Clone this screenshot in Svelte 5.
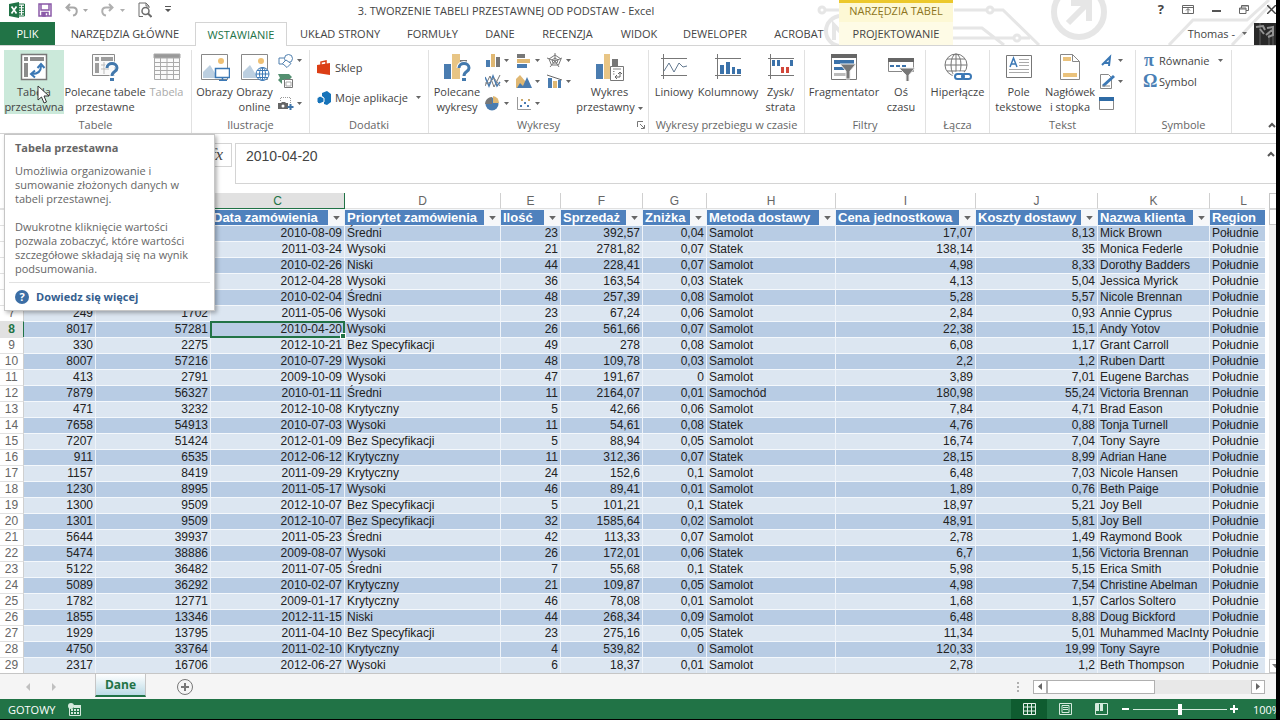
<script>
	let formula = '2010-04-20';
	let zoom = 50;
	let selectedRow = 8;

	const tabs = [
		'NARZĘDZIA GŁÓWNE',
		'WSTAWIANIE',
		'UKŁAD STRONY',
		'FORMUŁY',
		'DANE',
		'RECENZJA',
		'WIDOK',
		'DEWELOPER',
		'ACROBAT',
		'PROJEKTOWANIE'
	];
	let activeTab = 'WSTAWIANIE';

	const columns = [
		{ letter: 'A', title: '', num: true },
		{ letter: 'B', title: '', num: true },
		{ letter: 'C', title: 'Data zamówienia', num: true },
		{ letter: 'D', title: 'Priorytet zamówienia' },
		{ letter: 'E', title: 'Ilość', num: true },
		{ letter: 'F', title: 'Sprzedaż', num: true },
		{ letter: 'G', title: 'Zniżka', num: true },
		{ letter: 'H', title: 'Metoda dostawy' },
		{ letter: 'I', title: 'Cena jednostkowa', num: true },
		{ letter: 'J', title: 'Koszty dostawy', num: true },
		{ letter: 'K', title: 'Nazwa klienta' },
		{ letter: 'L', title: 'Region' }
	];

	const rows = [
		['', '', '2010-08-09', 'Średni', '23', '392,57', '0,04', 'Samolot', '17,07', '8,13', 'Mick Brown'],
		['', '', '2011-03-24', 'Wysoki', '21', '2781,82', '0,07', 'Statek', '138,14', '35', 'Monica Federle'],
		['', '', '2010-02-26', 'Niski', '44', '228,41', '0,07', 'Samolot', '4,98', '8,33', 'Dorothy Badders'],
		['', '', '2012-04-28', 'Wysoki', '36', '163,54', '0,03', 'Statek', '4,13', '5,04', 'Jessica Myrick'],
		['', '', '2010-02-04', 'Średni', '48', '257,39', '0,08', 'Samolot', '5,28', '5,57', 'Nicole Brennan'],
		['249', '1702', '2011-05-06', 'Wysoki', '23', '67,24', '0,06', 'Samolot', '2,84', '0,93', 'Annie Cyprus'],
		['8017', '57281', '2010-04-20', 'Wysoki', '26', '561,66', '0,07', 'Samolot', '22,38', '15,1', 'Andy Yotov'],
		['330', '2275', '2012-10-21', 'Bez Specyfikacji', '49', '278', '0,08', 'Samolot', '6,08', '1,17', 'Grant Carroll'],
		['8007', '57216', '2010-07-29', 'Wysoki', '48', '109,78', '0,03', 'Samolot', '2,2', '1,2', 'Ruben Dartt'],
		['413', '2791', '2009-10-09', 'Wysoki', '47', '191,67', '0', 'Samolot', '3,89', '7,01', 'Eugene Barchas'],
		['7879', '56327', '2010-01-11', 'Średni', '11', '2164,07', '0,01', 'Samochód', '180,98', '55,24', 'Victoria Brennan'],
		['471', '3232', '2012-10-08', 'Krytyczny', '5', '42,66', '0,06', 'Samolot', '7,84', '4,71', 'Brad Eason'],
		['7658', '54913', '2010-07-03', 'Wysoki', '11', '54,61', '0,08', 'Statek', '4,76', '0,88', 'Tonja Turnell'],
		['7207', '51424', '2012-01-09', 'Bez Specyfikacji', '5', '88,94', '0,05', 'Samolot', '16,74', '7,04', 'Tony Sayre'],
		['911', '6535', '2012-06-12', 'Krytyczny', '11', '312,36', '0,07', 'Statek', '28,15', '8,99', 'Adrian Hane'],
		['1157', '8419', '2011-09-29', 'Krytyczny', '24', '152,6', '0,1', 'Samolot', '6,48', '7,03', 'Nicole Hansen'],
		['1230', '8995', '2011-05-17', 'Wysoki', '46', '89,41', '0,01', 'Samolot', '1,89', '0,76', 'Beth Paige'],
		['1300', '9509', '2012-10-07', 'Bez Specyfikacji', '5', '101,21', '0,1', 'Statek', '18,97', '5,21', 'Joy Bell'],
		['1301', '9509', '2012-10-07', 'Bez Specyfikacji', '32', '1585,64', '0,02', 'Samolot', '48,91', '5,81', 'Joy Bell'],
		['5644', '39937', '2011-05-23', 'Średni', '42', '113,33', '0,07', 'Samolot', '2,78', '1,49', 'Raymond Book'],
		['5474', '38886', '2009-08-07', 'Wysoki', '26', '172,01', '0,06', 'Statek', '6,7', '1,56', 'Victoria Brennan'],
		['5122', '36482', '2011-07-05', 'Średni', '7', '55,68', '0,1', 'Statek', '5,98', '5,15', 'Erica Smith'],
		['5089', '36292', '2010-02-07', 'Krytyczny', '21', '109,87', '0,05', 'Samolot', '4,98', '7,54', 'Christine Abelman'],
		['1782', '12771', '2009-01-17', 'Krytyczny', '46', '78,08', '0,01', 'Samolot', '1,68', '1,57', 'Carlos Soltero'],
		['1855', '13346', '2012-11-15', 'Niski', '44', '268,34', '0,09', 'Samolot', '6,48', '8,88', 'Doug Bickford'],
		['1929', '13795', '2011-04-10', 'Bez Specyfikacji', '23', '275,16', '0,05', 'Statek', '11,34', '5,01', 'Muhammed MacInty'],
		['4750', '33764', '2011-02-10', 'Krytyczny', '4', '539,82', '0', 'Samolot', '120,33', '19,99', 'Tony Sayre'],
		['2317', '16706', '2012-06-27', 'Wysoki', '6', '18,37', '0,01', 'Samolot', '2,78', '1,2', 'Beth Thompson']
	].map((r) => [...r, 'Południe']);
</script>

{#snippet caret()}
	<svg class="caret" width="5" height="3" viewBox="0 0 5 3"><path d="M0 0h5L2.500 3z" fill="#666" /></svg>
{/snippet}

<div class="app">
	<header>
		<svg class="art" width="470" height="45" viewBox="0 0 470 45" fill="none" stroke="#e6e6e6" stroke-width="3">
			<circle cx="16" cy="10" r="3" />
			<path d="M19 10h20M148 10h33M187 10h10l36 35M146 28h30l22 17M146 38h62M214 38h10" />
			<circle cx="184" cy="10" r="3" fill="#fff" />
			<circle cx="211" cy="38" r="3" fill="#fff" />
			<circle cx="35" cy="31" r="15" stroke-width="4" />
			<path d="M28 40V25l12 13V25" stroke-width="4" />
			<circle cx="273" cy="12" r="25" stroke-width="6" />
			<path d="M262 23l20-20M265 3h18v18" stroke-width="6" />
			<path d="M363 45l24-25h54l22-20M426 45l38-40" />
		</svg>

		<div class="titlebar">
			<div class="quick">
				<svg width="16" height="16" viewBox="0 0 16 16">
					<path d="M9 2h6.500v12H9z" fill="#fff" stroke="#217346" />
					<path d="M10 4.500h2M13 4.500h2M10 7h2M13 7h2M10 9.500h2M13 9.500h2M10 12h2M13 12h2" stroke="#217346" stroke-width="1.500" />
					<path d="M0 2l10-2v16L0 14z" fill="#217346" />
					<path d="M2.500 4.500l5 7M7.500 4.500l-5 7" stroke="#fff" stroke-width="1.700" />
				</svg>
				<button aria-label="Zapisz">
					<svg width="14" height="14" viewBox="0 0 14 14" fill="none" stroke="#8a5aa8" stroke-width="1.500">
						<path d="M1 1h12v12H1zM3 1v6h8V1M4 13V9.500h6V13" /><path d="M5 10.500h2V13H5z" fill="#8a5aa8" />
					</svg>
				</button>
				<button aria-label="Cofnij">
					<svg width="23" height="14" viewBox="0 0 23 14" fill="none" stroke="#a8a8a8" stroke-width="2">
						<path d="M5 1L1.500 4.500 5 8M2 4.500h6c5 0 5 7 0 8" /><path d="M18 6h5l-2.500 3z" fill="#a8a8a8" stroke="none" />
					</svg>
				</button>
				<button aria-label="Ponów">
					<svg width="24" height="14" viewBox="0 0 24 14" fill="none" stroke="#b0b0b0" stroke-width="2">
						<path d="M8 1l3.500 3.500L8 8M11 4.500H5c-5 0-5 7 0 8" /><path d="M19 6h5l-2.500 3z" fill="#b0b0b0" stroke="none" />
					</svg>
				</button>
				<button aria-label="Podgląd wydruku">
					<svg width="14" height="16" viewBox="0 0 14 16" fill="none" stroke="#6d6d6d">
						<path d="M5 14.500H1V1h7l3 3v2M8 1v3h3" /><circle cx="7.500" cy="9" r="3.500" stroke-width="1.500" /><path d="M10 11.500l3.500 3.500" stroke-width="2" />
					</svg>
				</button>
				<button aria-label="Dostosuj">
					<svg width="6" height="7" viewBox="0 0 6 7"><path d="M0 0h6v1H0zM0 3h6L3 6z" fill="#555" /></svg>
				</button>
			</div>
			<div class="title">3. TWORZENIE TABELI PRZESTAWNEJ OD PODSTAW - Excel</div>
			<div class="context">NARZĘDZIA TABEL</div>
			<div class="window">
				<button class="help" aria-label="Pomoc">?</button>
				<button aria-label="Opcje wstążki">
					<svg width="12" height="9" viewBox="0 0 12 9" fill="none" stroke="#666"><path d="M.5.5h11v8H.5zM.5 2.500h11M6 8V4M4 5.500l2-2 2 2" /></svg>
				</button>
				<button aria-label="Minimalizuj">
					<svg width="9" height="9" viewBox="0 0 9 9"><path d="M0 5h9v2H0z" fill="#555" /></svg>
				</button>
				<button aria-label="Przywróć">
					<svg width="10" height="9" viewBox="0 0 10 9" fill="none" stroke="#666"><path d="M2.500 3V.5h7v5H7M.5 3h6.500v5.500H.5zM.5 4h6.500M3 1h6" /></svg>
				</button>
				<button aria-label="Zamknij">
					<svg width="9" height="9" viewBox="0 0 9 9"><path d="M0 0l9 9M9 0L0 9" stroke="#444" stroke-width="1.500" /></svg>
				</button>
			</div>
		</div>

		<nav class="tabs">
			<button class="file">PLIK</button>
			{#each tabs as tab}
				<button
					class:active={tab === activeTab}
					class:design={tab === 'PROJEKTOWANIE'}
					on:click={() => (activeTab = tab)}>{tab}</button>
			{/each}
			<div class="account">
				<span>Thomas -</span>
				{@render caret()}
				<svg width="22" height="22" viewBox="0 0 22 22">
					<path d="M0 0h22v22H0z" fill="#292929" />
					<path d="M6 0v22M19 8v14M15 9v13" stroke="#454545" stroke-width="2" />
					<path d="M2 4l7-1 2 4M6 6l4 5M13 5l6-1v8l-5 2M12 12l6-5" fill="none" stroke="#939393" stroke-width="2" />
				</svg>
			</div>
		</nav>
	</header>

	<section class="ribbon">
		<div class="group tables">
			<div class="body">
				<button class="big hot">
					<svg width="28" height="28" viewBox="0 0 28 28" fill="none">
						<path d="M1.500 1.500h25v25h-25z" fill="#fff" stroke="#777" stroke-width="1.500" />
						<path d="M4 4h4v4H4zM10 4h14v4H10zM4 10h4v14H4z" fill="#8c8c8c" />
						<path d="M12 21c6 0 9-3 9-8M17.500 15l3.500-4 3.500 4M15 17.500L11 21l4 3.500" stroke="#3b78b5" stroke-width="2" />
					</svg>
					<span>Tabela<br />przestawna</span>
				</button>
				<button class="big">
					<svg width="28" height="28" viewBox="0 0 28 28" fill="none">
						<path d="M1.500 1.500h22v21h-22z" fill="#fafafa" stroke="#8b8b8b" />
						<path d="M4 4h4v4H4zM10 4h12v4H10zM4 10h4v10H4z" fill="#9d9d9d" /><path d="M10 12h8M10 16h8M13 9v12" stroke="#bbb" />
						<path d="M16 15c0-6 10-6 10 0 0 4-5 3-5 8" stroke="#fff" stroke-width="5" /><path d="M16 15c0-6 10-6 10 0 0 4-5 3-5 8" stroke="#4379ad" stroke-width="3" /><path d="M19 25h4v3h-4z" fill="#4379ad" />
					</svg>
					<span>Polecane tabele<br />przestawne</span>
				</button>
				<button class="big disabled" disabled>
					<svg width="28" height="28" viewBox="0 0 28 28" fill="none" stroke="#aaa">
						<path d="M1.500 1.500h25v25h-25z" fill="#fafafa" /><path d="M1 1h26v4H1z" fill="#999" />
						<path d="M1 9.500h26M1 13.500h26M1 17.500h26M1 21.500h26M7.500 5v21M14 5v21M20.500 5v21" />
					</svg>
					<span>Tabela</span>
				</button>
			</div>
			<div class="name">Tabele</div>
			<svg class="cursor" width="13" height="19" viewBox="0 0 13 19"><path d="M1 1v14l3.500-3 2.500 6 2.500-1L7 11h5z" fill="#fff" stroke="#333" /></svg>
		</div>

		<div class="group pictures">
			<div class="body">
				<button class="big">
					<svg width="30" height="28" viewBox="0 0 30 28" fill="none">
						<path d="M1.500 1.500h26v25h-26z" fill="#fff" stroke="#888" /><circle cx="21" cy="8" r="3" fill="#eec075" />
						<path d="M3 25v-6l7-7 8 13z" fill="#bccfe0" />
						<path d="M15.500 15.500h14v9h-14z" fill="#fff" stroke="#3b78b5" stroke-width="1.500" /><path d="M19 27.500h8M22.500 25v2" stroke="#3b78b5" stroke-width="1.500" />
					</svg>
					<span>Obrazy</span>
				</button>
				<button class="big">
					<svg width="30" height="28" viewBox="0 0 30 28" fill="none">
						<path d="M1.500 1.500h26v25h-26z" fill="#fff" stroke="#888" /><circle cx="21" cy="8" r="3" fill="#eec075" />
						<path d="M3 25v-6l7-7 8 13z" fill="#bccfe0" />
						<g stroke="#3b78b5"><circle cx="22.500" cy="21" r="6.500" fill="#fff" /><ellipse cx="22.500" cy="21" rx="3" ry="6.500" /><path d="M16 21h13M17 17.500h11M17 24.500h11M22.500 15v12" /></g>
					</svg>
					<span>Obrazy<br />online</span>
				</button>
				<div class="minis">
					<button aria-label="Kształty">
						<svg width="16" height="15" viewBox="0 0 16 15" fill="#fff" stroke="#4f7fae"><path d="M1 5h7v6H1z" /><circle cx="10.500" cy="5.500" r="4" /><path d="M8 7l5 3.500-4 4-4.500-4z" /></svg>{@render caret()}
					</button>
					<button aria-label="SmartArt">
						<svg width="16" height="15" viewBox="0 0 16 15"><path d="M0 0h11l3 3-3 3H4v4L0 6l2-2z" fill="#538f70" /><path d="M6.500 5.500h8v8h-8z" fill="#fff" stroke="#777" /><path d="M8 8h5v4H8z" fill="none" stroke="#aaa" /></svg>
					</button>
					<button aria-label="Zrzut ekranu">
						<svg width="16" height="15" viewBox="0 0 16 15" fill="none"><path d="M2.500 5V1.500h10V7" stroke="#999" stroke-dasharray="1 1" /><path d="M0 7h3l1-1h3l1 1h2v6H0z" fill="#666" /><circle cx="5" cy="10" r="1.500" fill="#fff" /><path d="M12.500 8v6M9.500 11h6" stroke="#3f74a8" stroke-width="2" /></svg>{@render caret()}
					</button>
				</div>
			</div>
			<div class="name">Ilustracje</div>
		</div>

		<div class="group addins">
			<div class="body">
				<button class="line">
					<svg width="14" height="15" viewBox="0 0 14 15"><path d="M0 5l13-2v12L0 13z" fill="#dc3e15" /><path d="M4 6V2l5-1v4" fill="none" stroke="#dc3e15" stroke-width="1.500" /></svg>
					<span>Sklep</span>
				</button>
				<button class="line">
					<svg width="14" height="15" viewBox="0 0 14 15" fill="#1673b9"><path d="M5 3l5-2 4 3v8l-4 3-3-1V8L5 6z" /><path d="M0 8l3-2 4 2v4l-5 2-2-2z" stroke="#fff" /></svg>
					<span>Moje aplikacje</span>
					{@render caret()}
				</button>
			</div>
			<div class="name">Dodatki</div>
		</div>

		<div class="group charts">
			<div class="body">
				<button class="big">
					<svg width="28" height="28" viewBox="0 0 28 28" fill="none">
						<path d="M1 11h7v15H1z" fill="#4a7cb0" /><path d="M9 1h8v25H9z" fill="#e8c585" /><path d="M17 7h7v6h-7z" fill="#777" />
						<path d="M16 15c0-6 10-6 10 0 0 4-5 3-5 8" stroke="#fff" stroke-width="5" /><path d="M16 15c0-6 10-6 10 0 0 4-5 3-5 8" stroke="#4379ad" stroke-width="3" /><path d="M19 25h4v3h-4z" fill="#4379ad" />
					</svg>
					<span>Polecane<br />wykresy</span>
				</button>
				<div class="minis three">
					<button aria-label="Wykres kolumnowy"><svg width="16" height="15" viewBox="0 0 16 15"><path d="M1 7h4v7H1z" fill="#4a7cb0" /><path d="M6 1h4v13H6z" fill="#e0b873" /><path d="M11 4h4v10h-4z" fill="#777" /></svg>{@render caret()}</button>
					<button aria-label="Wykres słupkowy"><svg width="16" height="15" viewBox="0 0 16 15"><path d="M1 1h8v4H1z" fill="#777" /><path d="M1 6h13v4H1z" fill="#e0b873" /><path d="M1 11h10v4H1z" fill="#4a7cb0" /></svg>{@render caret()}</button>
					<button aria-label="Wykres radarowy"><svg width="16" height="15" viewBox="0 0 16 15" fill="none" stroke="#777"><path d="M8 0v8l7-3M8 8l4 6M8 8l-5 6M8 8L0 5M8 2l6 4-2.500 6h-7L2 6zM8 5l3 2-1 3H6L5 7z" /></svg>{@render caret()}</button>
					<button aria-label="Wykres liniowy"><svg width="16" height="15" viewBox="0 0 16 15" fill="none"><path d="M0 12L5 2l4 11 6-12" stroke="#777" /><path d="M0 3l4 9 4-10 4 10 3-4" stroke="#4a7cb0" stroke-width="1.500" /><path d="M0 9h4l5-5 6 8" stroke="#888" /></svg>{@render caret()}</button>
					<button aria-label="Wykres warstwowy"><svg width="16" height="15" viewBox="0 0 16 15"><path d="M0 14V5l4-4 11 13z" fill="#e0b873" /><path d="M1 14l3-5 3 3 4-9 5 11z" fill="#4a7cb0" /></svg>{@render caret()}</button>
					<button aria-label="Wykres kombi"><svg width="16" height="15" viewBox="0 0 16 15"><path d="M1 4h4v10H1z" fill="#4a7cb0" /><path d="M6 7h4v7H6z" fill="#e0b873" /><path d="M11 6h3v8h-3z" fill="#4a7cb0" /><path d="M0 1l15 5" stroke="#666" /></svg>{@render caret()}</button>
					<button aria-label="Wykres kołowy"><svg width="16" height="15" viewBox="0 0 16 15"><circle cx="7" cy="8" r="6.500" fill="#4a7cb0" /><path d="M7 8H0a7 7 0 0 1 7-7z" fill="#777" /><path d="M8 7V0a7 7 0 0 1 6 7z" fill="#e0b873" /></svg>{@render caret()}</button>
					<button aria-label="Wykres punktowy"><svg width="16" height="15" viewBox="0 0 16 15"><path d="M1.500 1v12.500H15" fill="none" stroke="#999" /><path d="M4 9h2v2H4zM8 6h2v2H8zM11 9h2v2h-2z" fill="#4a7cb0" /><path d="M5 3h2v2H5zM12 3h2v2h-2z" fill="#c9a86c" /></svg>{@render caret()}</button>
				</div>
				<button class="big">
					<svg width="28" height="28" viewBox="0 0 28 28" fill="none">
						<path d="M0 11h7v15H0z" fill="#4a7cb0" /><path d="M8 1h6v25H8z" fill="#e8c585" /><path d="M16 6h6v8h-6z" fill="#777" />
						<path d="M14.500 13.500h13v14h-13z" fill="#fff" stroke="#777" /><path d="M17 16h8M17 18.500h1.500M17 21h1.500" stroke="#888" /><path d="M19 24h5v-5M22 21l2-2 2 2M21 22l-2 2 2 2" stroke="#666" />
					</svg>
					<span>Wykres<br />przestawny {@render caret()}</span>
				</button>
			</div>
			<div class="name">Wykresy</div>
			<button class="launcher" aria-label="Więcej opcji">
				<svg width="8" height="8" viewBox="0 0 8 8" fill="none" stroke="#777"><path d="M.5 6V.5H6M3 3l4 4M7.500 4v3.500H4" /></svg>
			</button>
		</div>

		<div class="group sparklines">
			<div class="body">
				<button class="big">
					<svg width="28" height="28" viewBox="0 0 28 28" fill="none" stroke="#777"><path d="M3.500 1v25M1 5.500h26M1 22.500h26" /><path d="M4 18l5-8 5 9 5-9 4 4 4-1" stroke="#61788f" /></svg>
					<span>Liniowy</span>
				</button>
				<button class="big">
					<svg width="28" height="28" viewBox="0 0 28 28" fill="none" stroke="#777"><path d="M3.500 1v25M1 5.500h26M1 22.500h26" /><path d="M6 12h4v9H6zM12 9h4v12h-4zM18 14h3v7h-3zM23 16h4v5h-4z" fill="#3b72aa" stroke="none" /></svg>
					<span>Kolumnowy</span>
				</button>
				<button class="big">
					<svg width="28" height="28" viewBox="0 0 28 28" fill="none" stroke="#777"><path d="M3.500 1v25M1 5.500h26M1 22.500h26" /><path d="M5 7h3v6H5zM10 7h3v6h-3zM23 7h3v6h-3z" fill="#3b72aa" stroke="none" /><path d="M14 14h3v6h-3zM19 14h3v6h-3z" fill="#d2473a" stroke="none" /></svg>
					<span>Zysk/<br />strata</span>
				</button>
			</div>
			<div class="name">Wykresy przebiegu w czasie</div>
		</div>

		<div class="group filters">
			<div class="body">
				<button class="big">
					<svg width="28" height="28" viewBox="0 0 28 28"><path d="M1.500 1.500h25v25h-25z" fill="#fff" stroke="#777" /><path d="M1 1h26v4H1z" fill="#666" /><path d="M4 7h20v4H4zM4 14h12v3H4z" fill="#3b72aa" /><path d="M4 20h12v3H4z" fill="#bbb" /><path d="M10 11h16l-6 7v8h-4v-8z" fill="#777" stroke="#eee" /></svg>
					<span>Fragmentator</span>
				</button>
				<button class="big">
					<svg width="28" height="28" viewBox="0 0 28 28"><path d="M1.500 5.500h25v13h-25z" fill="#fff" stroke="#888" /><path d="M1 5h26v4H1z" fill="#666" /><path d="M3 13h4M9 13h4M15 13h4" stroke="#3b72aa" stroke-width="2" /><path d="M12 15h16l-6 7v7h-3v-7z" fill="#777" stroke="#eee" /></svg>
					<span>Oś<br />czasu</span>
				</button>
			</div>
			<div class="name">Filtry</div>
		</div>

		<div class="group links">
			<div class="body">
				<button class="big">
					<svg width="30" height="28" viewBox="0 0 30 28" fill="none"><g stroke="#777"><circle cx="13" cy="12" r="11" /><ellipse cx="13" cy="12" rx="5" ry="11" /><path d="M13 1v22M2 12h22M4 6h18M4 18h18" /></g><g stroke="#fff" stroke-width="5"><rect x="12" y="21" width="9" height="5" rx="2.500" /></g><g stroke="#3b78b5" stroke-width="2"><rect x="12" y="21" width="9" height="5" rx="2.500" /><rect x="19" y="21" width="9" height="5" rx="2.500" /></g></svg>
					<span>Hiperłącze</span>
				</button>
			</div>
			<div class="name">Łącza</div>
		</div>

		<div class="group text">
			<div class="body">
				<button class="big">
					<svg width="28" height="28" viewBox="0 0 28 28" fill="none"><path d="M1.500 2.500h25v22h-25z" fill="#fff" stroke="#777" /><path d="M5 14L8.500 5 12 14M6 11h5" stroke="#3b78b5" stroke-width="1.500" /><path d="M14 6.500h10M14 9.500h10M14 12.500h10M4 16.500h20M4 19.500h20" stroke="#aaa" /></svg>
					<span>Pole<br />tekstowe</span>
				</button>
				<button class="big">
					<svg width="28" height="28" viewBox="0 0 28 28" fill="none"><path d="M4.500 1.500h12l7 7v18h-19z" fill="#fff" stroke="#888" /><path d="M16.500 1.500v7h7" stroke="#888" /><path d="M7 4h8v4H7zM7 20h14v4H7z" fill="#eac27c" /></svg>
					<span>Nagłówek<br />i stopka</span>
				</button>
				<div class="minis">
					<button aria-label="WordArt"><svg width="16" height="15" viewBox="0 0 16 15" fill="none"><path d="M3 12l8-8-1 9M5 10h6" stroke="#3b78b5" stroke-width="2" /></svg>{@render caret()}</button>
					<button aria-label="Wiersz podpisu"><svg width="16" height="15" viewBox="0 0 16 15" fill="none"><path d="M1.500.5h8l3 3v11h-11z" stroke="#888" fill="#fff" /><path d="M4 12l11-10" stroke="#3b78b5" stroke-width="3" /><path d="M3 12h8" stroke="#888" /></svg>{@render caret()}</button>
					<button aria-label="Obiekt"><svg width="16" height="15" viewBox="0 0 16 15"><path d="M.5 1.500h14v12H.5z" fill="#fff" stroke="#888" /><path d="M0 1h15v4H0z" fill="#2f6ba5" /></svg></button>
				</div>
			</div>
			<div class="name">Tekst</div>
		</div>

		<div class="group symbols">
			<div class="body">
				<button class="line"><b>π</b><span>Równanie</span>{@render caret()}</button>
				<button class="line"><b>Ω</b><span>Symbol</span></button>
			</div>
			<div class="name">Symbole</div>
		</div>

		<button class="collapse" aria-label="Zwiń wstążkę">
			<svg width="8" height="6" viewBox="0 0 8 6"><path d="M1 5l3-3 3 3" fill="none" stroke="#555" stroke-width="2" /></svg>
		</button>

		<aside class="tip">
			<strong>Tabela przestawna</strong>
			<p>Umożliwia organizowanie i sumowanie złożonych danych w tabeli przestawnej.</p>
			<p>Dwukrotne kliknięcie wartości pozwala zobaczyć, które wartości szczegółowe składają się na wynik podsumowania.</p>
			<a href="#more"><i>?</i>Dowiedz się więcej</a>
		</aside>
	</section>

	<section class="formula">
		<button class="fx"><em>fx</em></button>
		<input type="text" aria-label="Pasek formuły" bind:value={formula} />
		<button class="expand" aria-label="Zwiń pasek formuły">
			<svg width="8" height="6" viewBox="0 0 8 6"><path d="M1 5l3-3 3 3" fill="none" stroke="#555" stroke-width="2" /></svg>
		</button>
	</section>

	<section class="sheet">
		<div class="grid">
			<table>
				<colgroup>
					<col class="row-no" />
					{#each columns as col}<col class="col-{col.letter}" />{/each}
				</colgroup>
				<thead>
					<tr class="letters">
						<th></th>
						{#each columns as col}
							<th class:current={col.letter === 'C'}>{col.title && col.letter}</th>
						{/each}
					</tr>
				</thead>
				<tbody>
					<tr class="titles">
						<th></th>
						{#each columns as col}
							<td>
								<div>
									<span>{col.title}</span>
									{#if col.letter !== 'L'}
										<button aria-label="Filtr">{@render caret()}</button>
									{/if}
								</div>
							</td>
						{/each}
					</tr>
					{#each rows as row, r}
						<tr class:band={r % 2 === 0} on:click={() => (selectedRow = r + 2)}>
							<th class:current={r + 2 === selectedRow}>{row[0] && r + 2}</th>
							{#each row as cell, c}
								<td class:num={columns[c].num} class:selected={c === 2 && r + 2 === selectedRow}>{cell}</td>
							{/each}
						</tr>
					{/each}
				</tbody>
			</table>
		</div>
		<div class="vscroll">
			<span class="up"></span>
			<span class="thumb"></span>
			<span class="down"><svg width="7" height="4" viewBox="0 0 7 4"><path d="M0 0h7L3.500 4z" fill="#777" /></svg></span>
		</div>
	</section>

	<section class="sheetbar">
		<div class="arrows">
			<svg width="4" height="8" viewBox="0 0 4 8"><path d="M4 0v8L0 4z" fill="#c0c0c0" /></svg>
			<svg width="4" height="8" viewBox="0 0 4 8"><path d="M0 0v8l4-4z" fill="#c0c0c0" /></svg>
		</div>
		<button class="tab">Dane</button>
		<button class="add" aria-label="Nowy arkusz">
			<svg width="16" height="16" viewBox="0 0 16 16" fill="none" stroke="#777"><circle cx="8" cy="8" r="7.500" /><path d="M8 4v8M4 8h8" stroke-width="2" /></svg>
		</button>
		<svg class="dots" width="2" height="10" viewBox="0 0 2 10"><path d="M0 0h2v2H0zM0 4h2v2H0zM0 8h2v2H0z" fill="#b0b0b0" /></svg>
		<div class="hscroll">
			<button aria-label="W lewo"><svg width="4" height="7" viewBox="0 0 4 7"><path d="M4 0v7L0 3.500z" fill="#666" /></svg></button>
			<span class="thumb"></span>
			<button class="right" aria-label="W prawo"><svg width="4" height="7" viewBox="0 0 4 7"><path d="M0 0v7l4-3.500z" fill="#666" /></svg></button>
		</div>
	</section>

	<footer>
		<span>GOTOWY</span>
		<svg width="13" height="13" viewBox="0 0 13 13"><path d="M1.500 3.500h11v9h-11z" fill="none" stroke="#d5eadd" /><path d="M6 2h7v3H6zM3 6h2v2H3zM6 6h2v2H6zM9 6h2v2H9zM3 9h2v2H3zM6 9h2v2H6zM9 9h2v2H9z" fill="#d5eadd" /><circle cx="3" cy="3" r="3" fill="#d5eadd" /></svg>
		<div class="views">
			<button class="on" aria-label="Normalny"><svg width="13" height="12" viewBox="0 0 13 12" fill="none" stroke="#e4f1e9"><path d="M.5.5h12v11H.5zM.5 4h12M.5 8h12M4.500.5v11M8.500.5v11" /></svg></button>
			<button aria-label="Układ strony"><svg width="13" height="12" viewBox="0 0 13 12" fill="none" stroke="#d5eadd"><path d="M.5.5h12v11H.5zM3 2.500h7v7H3zM4 4.500h5M4 6.500h5" /></svg></button>
			<button aria-label="Podział stron"><svg width="13" height="12" viewBox="0 0 13 12"><path d="M.5.5h12v11H.5z" fill="none" stroke="#d5eadd" /><path d="M1 1h3v7H1zM5 1h3v7H5z" fill="#d5eadd" /></svg></button>
		</div>
		<button class="step" aria-label="Pomniejsz"><svg width="7" height="8" viewBox="0 0 7 8"><path d="M0 3h7v2H0z" fill="#fff" /></svg></button>
		<input type="range" aria-label="Powiększenie" bind:value={zoom} />
		<button class="step" aria-label="Powiększ"><svg width="8" height="8" viewBox="0 0 8 8"><path d="M0 3h8v2H0zM3 0h2v8H3z" fill="#fff" /></svg></button>
		<span class="percent">100%</span>
	</footer>
</div>

<style>
	:global(body) {
		background: #000;
	}

	.app {
		display: flex;
		flex-direction: column;
		margin-right: 4px;
		overflow: hidden;
		background: #fff;
		color: #444;
		font: 11px/15px 'Open Sans', 'Noto Sans', sans-serif;
	}

	svg {
		display: block;
		flex: none;
	}

	button {
		padding: 0;
		border: 0;
		background: none;
		color: inherit;
		font: inherit;
		white-space: nowrap;
	}

	header {
		position: relative;
		background: #fff;
	}

	.art {
		position: absolute;
		top: 0;
		left: 806px;
	}

	.titlebar {
		position: relative;
		display: grid;
		grid-template-columns: 173px 666px 114px 1fr;
		height: 22px;
	}

	.quick {
		display: flex;
		align-items: center;
		gap: 13px;
		padding-left: 9px;
		padding-bottom: 3px;
	}

	.title {
		text-align: center;
		line-height: 22px;
	}

	.context {
		box-sizing: border-box;
		border-top: 3px solid #ecc82c;
		background: #fdf8d5;
		color: #8d7521;
		text-align: center;
		line-height: 16px;
	}

	.window {
		display: flex;
		justify-content: flex-end;
		align-items: center;
		gap: 18px;
		padding-bottom: 3px;
	}

	.window .help {
		font-size: 13px;
		font-weight: 700;
	}

	.tabs {
		position: relative;
		display: grid;
		grid-template-columns: 55px 140px 92px 106px 79px 56px 79px 64px 88px 80px 114px 1fr;
		height: 24px;
		border-bottom: 1px solid #d4d4d4;
		box-sizing: border-box;
	}

	.tabs .file {
		background: #217346;
		color: #fff;
	}

	.tabs .active {
		margin-bottom: -1px;
		border: 1px solid #d4d4d4;
		border-bottom: 0;
		background: #fff;
		color: #217346;
	}

	.tabs .design {
		background: #fefbe6;
	}

	.account {
		display: flex;
		justify-content: flex-end;
		align-items: center;
		gap: 7px;
	}

	.ribbon {
		position: relative;
		display: flex;
		height: 87px;
		border-bottom: 1px solid #d4d4d4;
	}

	.group {
		position: relative;
		box-sizing: border-box;
		flex: none;
		margin: 4px 0 0;
		padding: 0 3px;
		border-right: 1px solid #e1e1e1;
	}

	.body {
		display: grid;
		height: 67px;
		align-items: start;
		align-content: start;
	}

	.name {
		color: #666;
		text-align: center;
		line-height: 16px;
		white-space: nowrap;
	}

	.tables {
		width: 192px;
	}
	.tables .body {
		grid-template-columns: 60px 82px 41px;
		justify-content: center;
	}

	.pictures {
		width: 118px;
	}
	.pictures .body {
		grid-template-columns: 39px 41px 1fr;
	}

	.addins {
		width: 119px;
	}
	.addins .body {
		box-sizing: border-box;
		padding: 2px 4px;
		grid-template-rows: 30px 30px;
	}

	.charts {
		width: 220px;
	}
	.charts .body {
		grid-template-columns: 50px 92px 1fr;
	}

	.sparklines {
		width: 156px;
	}
	.sparklines .body {
		grid-template-columns: 44px 64px 1fr;
	}

	.filters {
		width: 121px;
	}
	.filters .body {
		grid-template-columns: 72px 1fr;
	}

	.links {
		width: 64px;
	}

	.text {
		width: 146px;
	}
	.text .body {
		grid-template-columns: 51px 52px 1fr;
	}

	.symbols {
		width: 96px;
	}
	.symbols .body {
		grid-template-rows: 20px 22px;
		padding: 0 4px;
	}

	.big {
		display: flex;
		flex-direction: column;
		align-items: center;
		gap: 3px;
		height: 64px;
		padding-top: 3px;
	}

	.big .caret {
		display: inline-block;
		vertical-align: middle;
	}

	.hot {
		background: #cbe9da;
	}

	.disabled {
		color: #aaa;
	}

	.minis {
		display: grid;
		grid-template-rows: 20px 22px 22px;
		padding-left: 3px;
	}

	.minis.three {
		grid-template-columns: repeat(3, 31px);
	}

	.minis button {
		display: flex;
		align-items: center;
		gap: 3px;
	}

	.line {
		display: flex;
		align-items: center;
		gap: 4px;
		height: 100%;
	}

	.line .caret {
		margin-left: 4px;
	}

	.line b {
		width: 12px;
		color: #4a7fb5;
		font: bold 18px/20px 'Liberation Serif', serif;
	}

	.launcher {
		position: absolute;
		right: 3px;
		bottom: 4px;
	}

	.cursor {
		position: absolute;
		left: 37px;
		top: 35px;
	}

	.collapse {
		align-self: flex-end;
		margin: 0 0 5px auto;
	}

	.tip {
		position: absolute;
		z-index: 2;
		left: 4px;
		top: 88px;
		box-sizing: border-box;
		width: 211px;
		padding: 6px 10px;
		border: 1px solid #c6c6c6;
		background: #fff;
		box-shadow: 2px 2px 4px rgba(0, 0, 0, 0.3);
		color: #666;
		line-height: 14px;
	}

	.tip p {
		margin: 9px 0 0;
	}

	.tip p + p {
		margin-top: 14px;
	}

	.tip a {
		display: flex;
		align-items: center;
		gap: 7px;
		margin: 6px -6px 0;
		padding: 7px 6px 0;
		border-top: 1px solid #e1e1e1;
		color: #35608f;
		font-weight: 700;
		text-decoration: none;
	}

	.tip i {
		width: 14px;
		border-radius: 50%;
		background: #3b6ea5;
		color: #fff;
		font-style: normal;
		text-align: center;
	}

	.formula {
		position: relative;
		display: flex;
		align-items: flex-start;
		gap: 3px;
		height: 50px;
		padding-top: 9px;
	}

	.fx {
		box-sizing: border-box;
		width: 102px;
		height: 24px;
		margin-left: 130px;
		padding-right: 8px;
		border: 1px solid #d4d4d4;
		font: 17px/20px 'Liberation Serif', serif;
		text-align: right;
	}

	.formula input {
		box-sizing: border-box;
		flex: 1;
		height: 41px;
		padding: 0 10px 16px;
		border: 1px solid #d4d4d4;
		border-right: 0;
		background: #fff;
		color: #444;
		font: 14px 'Liberation Sans', Arial, sans-serif;
	}

	.expand {
		position: absolute;
		right: 1px;
		top: 17px;
	}

	.sheet {
		display: flex;
		gap: 4px;
		font: 12px/15px 'Liberation Sans', Arial, sans-serif;
	}

	.grid {
		flex: 1;
		min-width: 0;
		overflow: hidden;
	}

	table {
		width: 1278px;
		table-layout: fixed;
		border-spacing: 0;
	}

	.row-no {
		width: 24px;
	}
	.col-A {
		width: 72px;
	}
	.col-B {
		width: 115px;
	}
	.col-C {
		width: 134px;
	}
	.col-D {
		width: 156px;
	}
	.col-E {
		width: 60px;
	}
	.col-F {
		width: 82px;
	}
	.col-G {
		width: 64px;
	}
	.col-H {
		width: 129px;
	}
	.col-I {
		width: 140px;
	}
	.col-J {
		width: 122px;
	}
	.col-K {
		width: 112px;
	}
	.col-L {
		width: 68px;
	}

	th {
		height: 15px;
		padding: 0;
		border-right: 1px solid #d0d0d0;
		border-top: 1px solid #e1e1e1;
		color: #666;
		font-weight: 400;
	}

	td {
		position: relative;
		height: 15px;
		padding: 0 1px 0 2px;
		border-right: 1px solid #eef3f9;
		border-top: 1px solid #f4f8fc;
		background: #dce6f1;
		color: #222;
		white-space: nowrap;
		overflow-x: clip;
	}

	.letters th {
		height: 13px;
		padding-top: 2px;
		border-top: 0;
		border-bottom: 1px solid #e1e1e1;
		line-height: 13px;
	}

	.letters .current {
		border-bottom-color: #217346;
	}

	th.current {
		border-right-color: #217346;
		background: #e1e1e1;
		color: #217346;
	}

	tr:not(.letters) th.current {
		font-weight: 700;
	}

	.band td {
		background: #b8cce4;
	}

	.num {
		padding-right: 2px;
		text-align: right;
	}

	.titles td {
		padding: 0 0 0 2px;
		background: #4f81bd;
		color: #fff;
		font-size: 13px;
		font-weight: 700;
	}

	.titles div {
		display: flex;
		justify-content: space-between;
		height: 15px;
	}

	.titles span {
		flex: 1;
		min-width: 0;
	}

	.titles button {
		display: flex;
		align-items: center;
		justify-content: center;
		width: 16px;
		background: #f6f7f9;
	}

	.titles .caret {
		width: 7px;
		height: 4px;
	}

	td.selected {
		z-index: 1;
		overflow: visible;
	}

	td.selected::before {
		content: '';
		position: absolute;
		inset: -1px;
		border: 2px solid #217346;
	}

	td.selected::after {
		content: '';
		position: absolute;
		right: -2px;
		bottom: -2px;
		width: 4px;
		height: 4px;
		border: 1px solid #fff;
		background: #217346;
	}

	.vscroll {
		display: flex;
		flex-direction: column;
		width: 7px;
		overflow: hidden;
		background: #f0f0f0;
	}

	.vscroll span {
		box-sizing: border-box;
		width: 17px;
		border: 1px solid #c6c6c6;
		background: #fff;
	}

	.up {
		height: 16px;
	}

	.vscroll .thumb {
		height: 16px;
	}

	.down {
		height: 14px;
		margin-top: auto;
		padding: 4px 2px;
	}

	.sheetbar {
		display: flex;
		align-items: center;
		height: 25px;
		padding-right: 11px;
		border-top: 1px solid #c6c6c6;
		background: #f5f5f5;
	}

	.arrows {
		display: flex;
		gap: 22px;
		width: 69px;
		padding-left: 26px;
	}

	.tab {
		align-self: flex-start;
		width: 51px;
		height: 23px;
		border: 1px solid #c6c6c6;
		border-top: 0;
		border-bottom: 2px solid #217346;
		background: linear-gradient(#fff, #bcdbe6);
		color: #217346;
		font-size: 12px;
		font-weight: 700;
	}

	.add {
		margin-left: 31px;
	}

	.dots {
		margin-left: auto;
	}

	.hscroll {
		display: flex;
		width: 232px;
		height: 14px;
		margin-left: 14px;
		background: #e8e8e8;
	}

	.hscroll button {
		box-sizing: border-box;
		width: 14px;
		padding: 0 4px;
		border: 1px solid #b0b0b0;
		background: #fff;
	}

	.hscroll .thumb {
		width: 106px;
		border: 1px solid #b0b0b0;
		background: #fff;
	}

	.hscroll .right {
		margin-left: auto;
	}

	footer {
		display: flex;
		align-items: center;
		height: 20px;
		padding-left: 8px;
		border-bottom: 1px solid #000;
		background: #217346;
		color: #fff;
		overflow: hidden;
	}

	footer > svg {
		margin-left: 13px;
	}

	.views {
		display: flex;
		margin-left: auto;
	}

	.views button {
		display: grid;
		place-items: center;
		width: 36px;
		height: 20px;
	}

	.views .on {
		background: #0f5c30;
	}

	.step {
		margin: 0 4px 0 3px;
	}

	footer input {
		appearance: none;
		width: 94px;
		height: 12px;
		margin: 0;
		background: linear-gradient(#d5eadd, #d5eadd) center / 100% 1px no-repeat;
	}

	footer input::-webkit-slider-thumb {
		appearance: none;
		width: 4px;
		height: 11px;
		background: #fff;
	}

	.percent {
		width: 23px;
		margin-left: 11px;
	}
</style>
